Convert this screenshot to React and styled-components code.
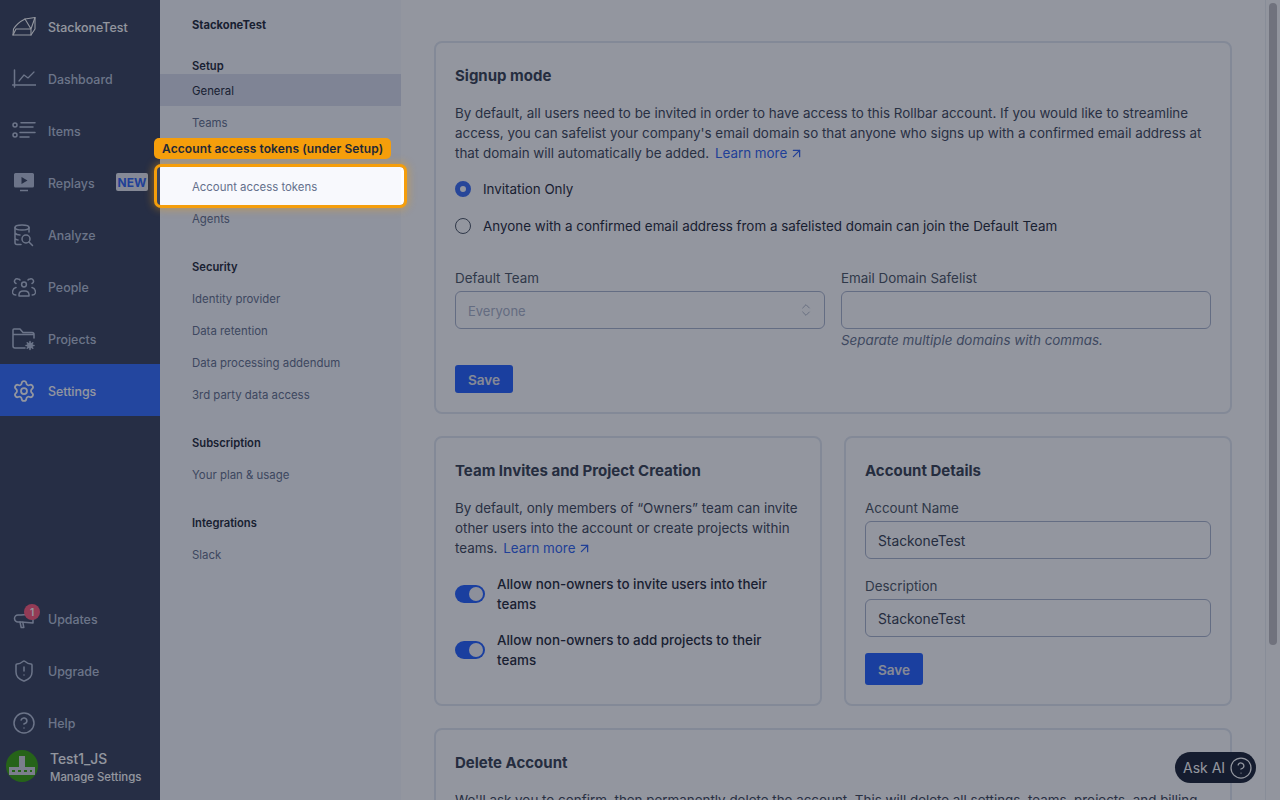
import React from 'react';
import styled, { createGlobalStyle } from 'styled-components';
import { Settings, ShieldAlert, CircleHelp, ArrowUpRight, ChevronsUpDown } from 'lucide-react';

const Global = createGlobalStyle`
  html, body { margin: 0; height: 100%; overflow: hidden; background: #fff; }
  body { font-family: Inter, "Liberation Sans", sans-serif; -webkit-font-smoothing: antialiased; }
  * { box-sizing: border-box; }
`;

const Shell = styled.div`
  display: flex;
  height: 100vh;
  overflow: hidden;
  position: relative;
`;

const Sidebar = styled.nav`
  width: 160px;
  flex: none;
  background: #39435b;
  display: flex;
  flex-direction: column;
  justify-content: space-between;
`;
const SideGroup = styled.div`
  display: flex;
  flex-direction: column;
`;
const SideRow = styled.div`
  height: 52px;
  display: flex;
  align-items: center;
  gap: 12px;
  padding: 2px 0 0 12px;
  color: ${p => (p.$bright ? '#fff' : '#b8c2d7')};
  background: ${p => (p.$active ? '#336eff' : 'transparent')};
  font-size: 12.4px;
  font-weight: 500;
  position: relative;
  svg.ic { flex: none; width: 24px; height: 24px; }
`;
const NewBadge = styled.span`
  position: absolute;
  left: 116px;
  top: 17px;
  width: 32px;
  height: 18px;
  background: #e6e8ee;
  color: #2f63f0;
  font-size: 12px;
  font-weight: 700;
  border-radius: 2px;
  display: flex;
  align-items: center;
  justify-content: center;
`;
const CountBadge = styled.span`
  position: absolute;
  left: 24px;
  top: 12px;
  width: 16px;
  height: 16px;
  border-radius: 50%;
  background: #ff5a7a;
  color: #fff;
  font-size: 10px;
  font-weight: 600;
  display: flex;
  align-items: center;
  justify-content: center;
`;
const UserRow = styled.div`
  height: 32px;
  display: flex;
  align-items: center;
  gap: 12px;
  padding-left: 6px;
  margin-top: 2px;
  margin-bottom: 18px;
  color: #fff;
`;
const UserText = styled.div`
  display: flex;
  flex-direction: column;
  margin-top: 4px;
`;
const UserName = styled.span`
  font-size: 13.8px;
  font-weight: 500;
  line-height: 18px;
`;
const UserSub = styled.span`
  font-size: 11.4px;
  font-weight: 500;
  line-height: 18px;
`;

const SubNav = styled.aside`
  width: 241px;
  flex: none;
  background: #f8f9fd;
  padding-top: 15px;
`;
const SubTitle = styled.div`
  font-size: 11.2px;
  font-weight: 700;
  line-height: 20px;
  color: #1f2937;
  padding-left: 32px;
  margin-bottom: 21px;
`;
const SubHeading = styled.div`
  font-size: 11.2px;
  font-weight: 600;
  line-height: 20px;
  color: #1f2937;
  padding-left: 32px;
  margin-top: ${p => (p.$first ? '0' : '23px')};
  margin-bottom: ${p => (p.$first ? '-2px' : '5px')};
`;
const SubItem = styled.div`
  height: 32px;
  display: flex;
  align-items: center;
  padding: 2px 0 0 32px;
  font-size: 11.4px;
  font-weight: 400;
  color: ${p => (p.$active ? '#1f2937' : '#64708c')};
  background: ${p => (p.$active ? '#dadeed' : 'transparent')};
`;

const Main = styled.main`
  flex: 1;
  height: 100vh;
  overflow: hidden;
  padding: 41px 33px 40px;
  background: #fff;
  color: #374151;
`;
const ScrollTrack = styled.div`
  width: 15px;
  flex: none;
  height: 100vh;
  background: #fdfdfd;
  border-left: 1px solid #eceef2;
  padding: 3px 3px 0 3px;
`;
const ScrollThumb = styled.div`
  width: 8px;
  height: 642px;
  border-radius: 4px;
  background: #bfbec1;
`;
const Stack = styled.div`
  display: flex;
  flex-direction: column;
  gap: 22px;
`;
const TwoCol = styled.div`
  display: grid;
  grid-template-columns: 1fr 1fr;
  gap: 22px;
`;
const Card = styled.section`
  border: 2px solid #e2e8f0;
  border-radius: 8px;
  padding: 19px;
`;
const CardTitle = styled.h2`
  margin: 4px 0 17px;
  font-size: 15px;
  line-height: 20px;
  font-weight: 700;
  color: #374151;
`;
const Para = styled.p`
  margin: 0;
  font-size: 13.4px;
  line-height: 20px;
  color: #3d4657;
`;
const Link = styled.a`
  color: #2f63f0;
  display: inline-flex;
  align-items: center;
  gap: 2px;
  margin-left: 2px;
  svg { width: 15px; height: 15px; }
`;
const RadioList = styled.div`
  display: flex;
  flex-direction: column;
  gap: 17px;
  margin-top: 16px;
`;
const RadioRow = styled.label`
  display: flex;
  align-items: center;
  gap: 12px;
  font-size: 13.4px;
  line-height: 20px;
  color: #1f2937;
`;
const RadioDot = styled.span`
  width: 16px;
  height: 16px;
  border-radius: 50%;
  flex: none;
  background: ${p => (p.$on ? '#fff' : 'transparent')};
  border: ${p => (p.$on ? '5px solid #3b6df5' : '1.5px solid #4b5563')};
`;
const FieldGrid = styled.div`
  display: grid;
  grid-template-columns: 1fr 1fr;
  gap: 16px;
  margin-top: 32px;
`;
const Field = styled.div`
  display: flex;
  flex-direction: column;
  margin-bottom: ${p => p.$mb || 0}px;
`;
const FieldLabel = styled.span`
  font-size: 13.4px;
  line-height: 20px;
  margin-bottom: 3px;
  color: #4b5563;
`;
const Input = styled.div`
  height: 38px;
  border: 1px solid #aab4cc;
  border-radius: 6px;
  padding: 2px 12px 0;
  display: flex;
  align-items: center;
  justify-content: space-between;
  font-size: ${p => (p.$muted ? '13px' : '13.8px')};
  color: ${p => (p.$muted ? '#aab2c8' : '#374151')};
  svg { width: 16px; height: 16px; color: #a0a8bc; margin: -2px -2px 0 0; }
`;
const Hint = styled.div`
  font-size: 13.4px;
  font-style: italic;
  line-height: 20px;
  margin-top: 1px;
  color: #66728c;
`;
const Button = styled.button`
  display: block;
  width: 58px;
  height: ${p => p.$h || 28}px;
  margin-top: ${p => p.$mt || 0}px;
  border: 0;
  border-radius: 3px;
  background: #2461ff;
  color: #e6e8ee;
  font: 600 13.6px Inter, sans-serif;
  padding: 2px 0 0;
`;
const ToggleRow = styled.div`
  display: flex;
  align-items: center;
  gap: 12px;
  font-size: 13.4px;
  font-weight: 500;
  line-height: 20px;
  color: #1f2937;
  margin-top: 16px;
`;
const Toggle = styled.span`
  width: 30px;
  height: 18px;
  border-radius: 9px;
  background: #2461ff;
  flex: none;
  display: flex;
  justify-content: flex-end;
  align-items: center;
  padding-right: 2px;
  &::after {
    content: '';
    width: 14px;
    height: 14px;
    border-radius: 50%;
    background: #f5f5f8;
  }
`;

const AskAi = styled.div`
  position: absolute;
  left: 1175px;
  top: 752px;
  width: 81px;
  height: 31px;
  border-radius: 16px;
  background: #1a2233;
  color: #fff;
  font-size: 14px;
  display: flex;
  align-items: center;
  padding-left: 8px;
  gap: 4px;
  svg { width: 24px; height: 24px; flex: none; }
`;

const Spotlight = styled.div`
  position: absolute;
  left: 157px;
  top: 167px;
  width: 247px;
  height: 38px;
  border-radius: 4px;
  pointer-events: none;
  box-shadow:
    0 0 0 3px #f59e0b,
    0 0 8px 4px rgba(245, 158, 11, 0.45),
    0 0 0 2000px rgba(15, 23, 42, 0.45);
`;
const Callout = styled.div`
  position: absolute;
  left: 154px;
  top: 138px;
  height: 21px;
  width: 237px;
  padding-left: 8px;
  border-radius: 5px;
  background: #f59e0b;
  color: #1f2937;
  font-size: 12px;
  font-weight: 600;
  line-height: 21px;
  letter-spacing: 0.1px;
  white-space: nowrap;
`;

const S = { fill: 'none', stroke: 'currentColor', strokeWidth: 1.5, strokeLinecap: 'round', strokeLinejoin: 'round', className: 'ic', viewBox: '0 0 24 24' };

const LogoIcon = () => (
  <svg {...S} strokeWidth="1.1">
    <path d="M1 20 1.5 14C4 10 9 6 13 4L23 2.5 23 14 19 20Z" />
    <path d="M4 14H19V20M19 14 23 2.5M13 4 19 14M1 20 4 14" />
  </svg>
);
const ChartIcon = () => (
  <svg {...S}>
    <path d="M2.5 3v17M0.5 18H24" />
    <path d="M7 14l5-6 4 3 6-6" strokeWidth="1.2" />
  </svg>
);
const ItemsIcon = () => (
  <svg {...S}>
    <circle cx="3" cy="6" r="2" />
    <circle cx="3" cy="16" r="2" />
    <path d="M9 3.7h14M8 8h13M8 13.5h15M8 18h9" />
  </svg>
);
const ReplayIcon = () => (
  <svg className="ic" viewBox="0 0 24 24">
    <path fill="currentColor" fillRule="evenodd" d="M3.5 2h17A1.5 1.5 0 0 1 22 3.5v11.5a1.5 1.5 0 0 1-1.5 1.5h-17A1.5 1.5 0 0 1 2 15V3.5A1.5 1.5 0 0 1 3.5 2ZM9.5 6v7l6-3.5-6-3.5Z" />
    <path d="M8 19.5h8" stroke="currentColor" strokeWidth="1.5" />
  </svg>
);
const AnalyzeIcon = () => (
  <svg {...S}>
    <ellipse cx="10" cy="4.5" rx="7" ry="2.5" />
    <path d="M3 4.5v15a2 2 0 0 0 2 2h4M17 4.5V9M3 10c1 1.5 3 2 5 2M3 15.5c1 1 2 1.5 3 1.5" />
    <circle cx="14" cy="16" r="4" />
    <path d="m17 19 3.5 3.5" />
  </svg>
);
const PeopleIcon = () => (
  <svg {...S}>
    <circle cx="12" cy="9.5" r="2.4" />
    <path d="M7 21v-1.5a4 4 0 0 1 4-3.5h2a4 4 0 0 1 4 3.5V21H7Z" />
    <path d="M4 8.5a2 2 0 0 1 2-4.5c1 0 1.6.5 2 1M20 8.5a2 2 0 0 0-2-4.5c-1 0-1.6.5-2 1M0.5 17.5c0-3 1.5-4.5 3.5-5M23.5 17.5c0-3-1.5-4.5-3.5-5M0.8 18.5c.5 1 1.5 1.5 3 1.5M23.2 18.5c-.5 1-1.5 1.5-3 1.5" />
  </svg>
);
const FolderGearIcon = () => (
  <svg {...S}>
    <path d="M13 21H3a2 2 0 0 1-2-2V3a1 1 0 0 1 1-1h6l3 3.5h9a2 2 0 0 1 2 2V11M1 7.5h21" />
    <circle cx="18" cy="18.5" r="2.2" fill="currentColor" />
    <path d="M18 14.5v1.5M18 21v1.5M14 18.5h1.5M20.5 18.5H22M15.2 15.7l1 1M19.8 20.3l1 1M15.2 21.3l1-1M19.8 16.7l1-1" />
  </svg>
);
const MegaphoneIcon = () => (
  <svg {...S}>
    <path d="M21 7v9l-12-1H6a3.5 3.5 0 0 1 0-7h3l12-1Z" />
    <path d="M8 15l1.2 5.5h2.6L10.8 15.2" />
  </svg>
);
const Avatar = () => (
  <svg width="32" height="32" viewBox="0 0 32 32" style={{ flex: 'none' }}>
    <circle cx="16" cy="16" r="16" fill="#39a30b" />
    <path fill="#d4d4dc" d="M13 6h6v11h-6zM3 17h26v3H3zM3 22h26v3H3zM3 17h3v8H3zM9 17h3v8H9zM15 17h3v8h-3zM21 17h3v8h-3zM26 17h3v8h-3z" />
  </svg>
);

export default function App() {
  return (
    <Shell>
      <Global />
      <Sidebar>
        <SideGroup>
          <SideRow $bright><LogoIcon /><span>StackoneTest</span></SideRow>
          <SideRow><ChartIcon /><span>Dashboard</span></SideRow>
          <SideRow><ItemsIcon /><span>Items</span></SideRow>
          <SideRow><ReplayIcon /><span>Replays</span><NewBadge>NEW</NewBadge></SideRow>
          <SideRow><AnalyzeIcon /><span>Analyze</span></SideRow>
          <SideRow><PeopleIcon /><span>People</span></SideRow>
          <SideRow><FolderGearIcon /><span>Projects</span></SideRow>
          <SideRow $active $bright><Settings className="ic" strokeWidth={1.75} /><span>Settings</span></SideRow>
        </SideGroup>
        <SideGroup>
          <SideRow><MegaphoneIcon /><span>Updates</span><CountBadge>1</CountBadge></SideRow>
          <SideRow><ShieldAlert className="ic" strokeWidth={1.5} /><span>Upgrade</span></SideRow>
          <SideRow><CircleHelp className="ic" strokeWidth={1.5} /><span>Help</span></SideRow>
          <UserRow>
            <Avatar />
            <UserText>
              <UserName>Test1_JS</UserName>
              <UserSub>Manage Settings</UserSub>
            </UserText>
          </UserRow>
        </SideGroup>
      </Sidebar>

      <SubNav>
        <SubTitle>StackoneTest</SubTitle>
        <SubHeading $first>Setup</SubHeading>
        <SubItem $active>General</SubItem>
        <SubItem>Teams</SubItem>
        <SubItem>Users</SubItem>
        <SubItem>Account access tokens</SubItem>
        <SubItem>Agents</SubItem>
        <SubHeading>Security</SubHeading>
        <SubItem>Identity provider</SubItem>
        <SubItem>Data retention</SubItem>
        <SubItem>Data processing addendum</SubItem>
        <SubItem>3rd party data access</SubItem>
        <SubHeading>Subscription</SubHeading>
        <SubItem>Your plan &amp; usage</SubItem>
        <SubHeading>Integrations</SubHeading>
        <SubItem>Slack</SubItem>
      </SubNav>

      <Main>
        <Stack>
          <Card>
            <CardTitle>Signup mode</CardTitle>
            <Para>
              By default, all users need to be invited in order to have access to this Rollbar account. If you would like to streamline access, you can safelist your company's email domain so that anyone who signs up with a confirmed email address at that domain will automatically be added. <Link>Learn more <ArrowUpRight /></Link>
            </Para>
            <RadioList>
              <RadioRow><RadioDot $on />Invitation Only</RadioRow>
              <RadioRow><RadioDot />Anyone with a confirmed email address from a safelisted domain can join the Default Team</RadioRow>
            </RadioList>
            <FieldGrid>
              <Field>
                <FieldLabel>Default Team</FieldLabel>
                <Input $muted>Everyone<ChevronsUpDown strokeWidth={1.25} /></Input>
              </Field>
              <Field>
                <FieldLabel>Email Domain Safelist</FieldLabel>
                <Input />
                <Hint>Separate multiple domains with commas.</Hint>
              </Field>
            </FieldGrid>
            <Button $mt={15}>Save</Button>
          </Card>
          <TwoCol>
            <Card>
              <CardTitle>Team Invites and Project Creation</CardTitle>
              <Para>
                By default, only members of “Owners” team can invite other users into the account or create projects within teams. <Link>Learn more <ArrowUpRight /></Link>
              </Para>
              <ToggleRow><Toggle /><span>Allow non-owners to invite users into their teams</span></ToggleRow>
              <ToggleRow><Toggle /><span>Allow non-owners to add projects to their teams</span></ToggleRow>
            </Card>
            <Card>
              <CardTitle>Account Details</CardTitle>
              <Field $mb={17}>
                <FieldLabel>Account Name</FieldLabel>
                <Input>StackoneTest</Input>
              </Field>
              <Field>
                <FieldLabel>Description</FieldLabel>
                <Input>StackoneTest</Input>
              </Field>
              <Button $h={32} $mt={16}>Save</Button>
            </Card>
          </TwoCol>
          <Card>
            <CardTitle>Delete Account</CardTitle>
            <Para>
              We'll ask you to confirm, then permanently delete the account. This will delete all settings, teams, projects, and billing information associated with the account. This action cannot be undone.
            </Para>
            <Button $h={32} $mt={16}>Delete</Button>
          </Card>
        </Stack>
      </Main>
      <ScrollTrack><ScrollThumb /></ScrollTrack>

      <AskAi>Ask AI<CircleHelp strokeWidth={1.25} /></AskAi>
      <Spotlight />
      <Callout>Account access tokens (under Setup)</Callout>
    </Shell>
  );
}
